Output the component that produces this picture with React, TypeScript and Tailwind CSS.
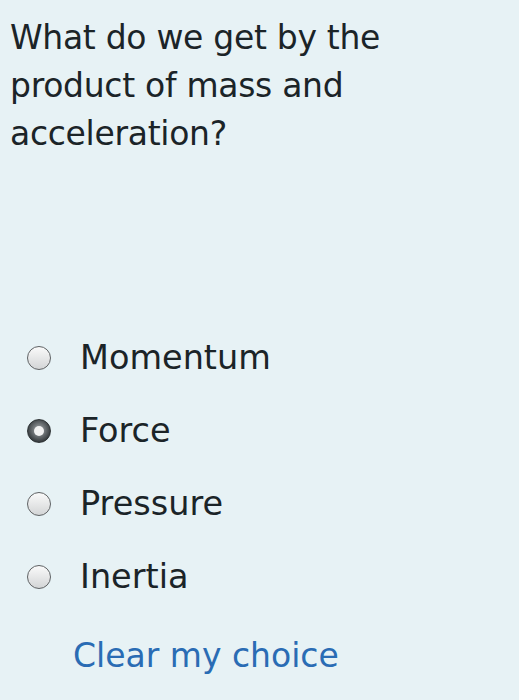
const options = ["Momentum", "Force", "Pressure", "Inertia"]

function Radio({ checked }: { checked: boolean }) {
	if (checked) {
		return (
			<span className="flex h-[24px] w-[24px] items-center justify-center rounded-full border border-[#2f3436] bg-[radial-gradient(circle_at_50%_45%,#8a8f92_20%,#3a3f42_70%)]">
				<span className="h-[10px] w-[10px] rounded-full bg-[#f1f1f1]"></span>
			</span>
		)
	}
	return (
		<span className="h-[24px] w-[24px] rounded-full border-[1.5px] border-[#5f6264] bg-[linear-gradient(180deg,#fafafa,#d3d5d6)]"></span>
	)
}

export default function App() {
	return (
		<div
			className="min-h-[700px] w-full bg-[#e7f2f5] text-[#1b2428]"
			style={{ fontFamily: '"DejaVu Sans", sans-serif' }}
		>
			<h1 className="max-w-[420px] pl-[10px] pt-[14px] text-[33px] leading-[48px] tracking-[-0.3px]">
				What do we get by the product of mass and acceleration?
			</h1>
			<div className="mt-[185px] flex flex-col gap-[43px] pl-[27px]">
				{options.map((o) => (
					<label key={o} className="flex h-[30px] items-center">
						<Radio checked={o === "Force"} />
						<span className="ml-[29px] text-[33.5px] leading-[30px]">{o}</span>
					</label>
				))}
			</div>
			<div className="mt-[49px] pl-[73px] text-[33px] leading-[30px] text-[#2a6cb4]">Clear my choice</div>
		</div>
	)
}
